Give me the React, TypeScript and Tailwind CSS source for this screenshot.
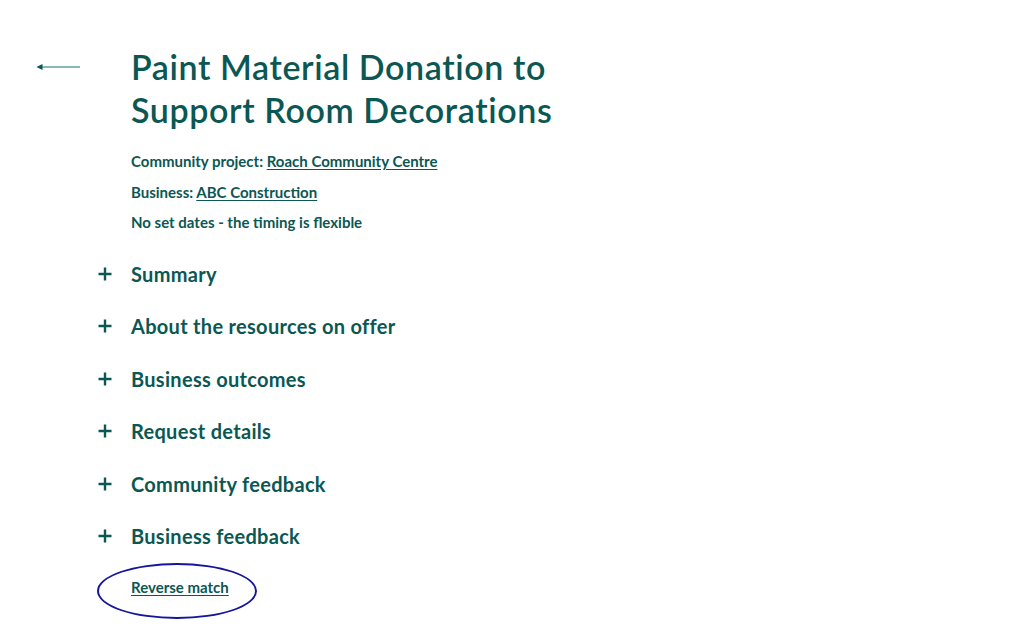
import React from 'react';

const sections = [
  'Summary',
  'About the resources on offer',
  'Business outcomes',
  'Request details',
  'Community feedback',
  'Business feedback',
];

const PlusIcon = () => (
  <svg width="14" height="14" viewBox="0 0 14 14" className="shrink-0">
    <path d="M7 0.5v13M0.5 7h13" stroke="#0b5753" strokeWidth="2.4" />
  </svg>
);

export default function App() {
  return (
    <div
      className="min-h-[631px] w-full bg-white text-[#0b5753]"
      style={{ fontFamily: 'Lato, "Open Sans", sans-serif' }}
    >
      <div className="flex pt-[45px]">
        <div className="w-[131px] shrink-0 pl-[36px] pt-[18px]">
          <svg width="44" height="8" viewBox="0 0 44 8">
            <path d="M6 4h38" stroke="#5fa29e" strokeWidth="1.3" />
            <path d="M0.5 4L6.5 1v6z" fill="#0b5753" />
          </svg>
        </div>
        <div className="flex flex-col">
          <h1 className="text-[34px] leading-[43px] font-semibold tracking-[0.6px]">
            Paint Material Donation to
            <br />
            Support Room Decorations
          </h1>
          <div className="mt-[21px] flex flex-col gap-[12.5px] text-[15px] leading-[18px] font-bold">
            <p>
              Community project:{' '}
              <a href="#" className="underline underline-offset-2">
                Roach Community Centre
              </a>
            </p>
            <p>
              Business:{' '}
              <a href="#" className="underline underline-offset-2">
                ABC Construction
              </a>
            </p>
            <p>No set dates - the timing is flexible</p>
          </div>
        </div>
      </div>

      <div className="ml-[98px] mt-[31px] flex flex-col gap-[28.4px]">
        {sections.map((s) => (
          <button key={s} className="flex items-center gap-[19px] text-left">
            <PlusIcon />
            <span className="text-[20px] leading-[24px] font-bold tracking-[0.3px]">{s}</span>
          </button>
        ))}
      </div>

      <div className="relative ml-[131px] mt-[27px] w-fit">
        <a href="#" className="text-[15px] leading-[18px] font-bold underline underline-offset-2">
          Reverse match
        </a>
        <div className="pointer-events-none absolute left-[-34px] top-[-12px] h-[56px] w-[160px] rounded-[50%] border-2 border-[#15169a]" />
      </div>
    </div>
  );
}
